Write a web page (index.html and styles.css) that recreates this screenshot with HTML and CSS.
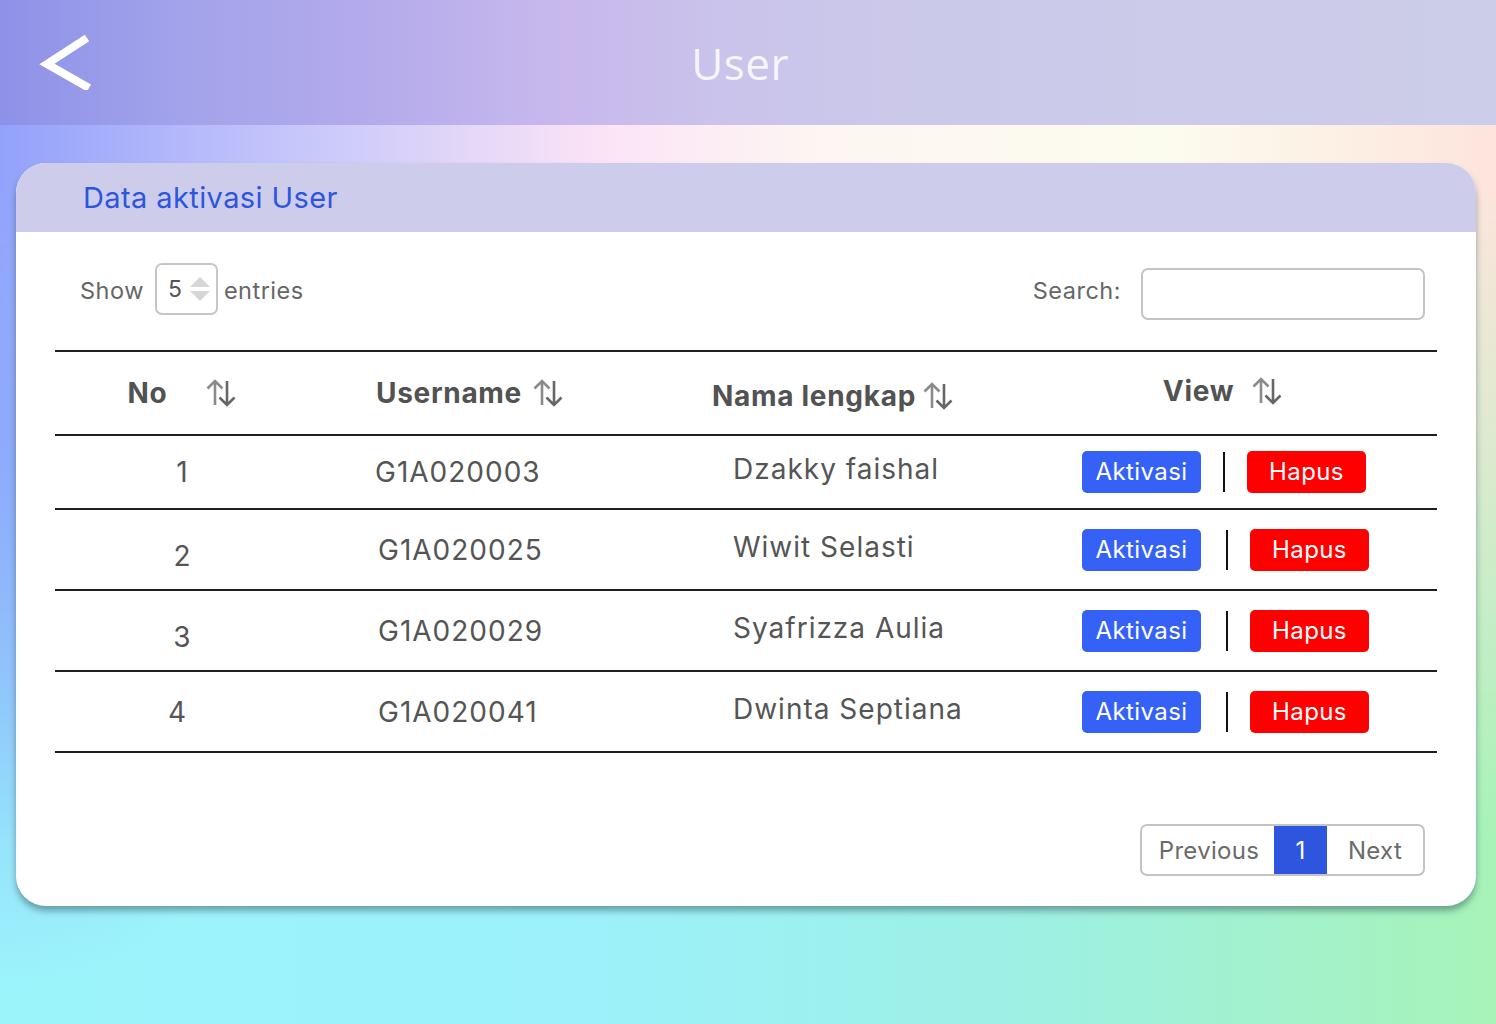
FILE: index.html
```html
<!DOCTYPE html>
<html lang="id">
<head>
<meta charset="utf-8">
<title>User</title>
<link rel="stylesheet" href="styles.css">
</head>
<body>
<div class="page">
  <header class="topbar">
    <a class="back" href="#" aria-label="Kembali">
      <svg width="56" height="56" viewBox="0 0 56 56"><path d="M48 4 L8 30 L50 54" fill="none" stroke="#fff" stroke-width="8" stroke-linejoin="miter"/></svg>
    </a>
    <h1 class="title">User</h1>
    <span class="back-spacer"></span>
  </header>

  <main class="card">
    <div class="card-head">Data aktivasi User</div>
    <div class="card-body">
      <div class="controls">
        <div class="show">
          <span class="lbl">Show</span>
          <div class="select">
            <span class="select-val">5</span>
            <span class="spin">
              <span class="tri up"></span>
              <span class="tri down"></span>
            </span>
          </div>
          <span class="lbl entries">entries</span>
        </div>
        <div class="search">
          <span class="lbl">Search:</span>
          <div class="search-input"></div>
        </div>
      </div>

      <div class="table">
        <div class="row head">
          <div class="c1 gap-no">No <svg class="sort" viewBox="0 0 36 30"><path d="M12 27V3M4.5 10.5L12 3l7.5 7.5" fill="none" stroke="#8a8a8a" stroke-width="2.6"/><path d="M24 3v24M16.5 19.5L24 27l7.5-7.5" fill="none" stroke="#666" stroke-width="2.6"/></svg></div>
          <div class="c2 gap-user">Username <svg class="sort" viewBox="0 0 36 30"><path d="M12 27V3M4.5 10.5L12 3l7.5 7.5" fill="none" stroke="#8a8a8a" stroke-width="2.6"/><path d="M24 3v24M16.5 19.5L24 27l7.5-7.5" fill="none" stroke="#666" stroke-width="2.6"/></svg></div>
          <div class="c3 gap-nama">Nama lengkap <svg class="sort" viewBox="0 0 36 30"><path d="M12 27V3M4.5 10.5L12 3l7.5 7.5" fill="none" stroke="#8a8a8a" stroke-width="2.6"/><path d="M24 3v24M16.5 19.5L24 27l7.5-7.5" fill="none" stroke="#666" stroke-width="2.6"/></svg></div>
          <div class="c4 gap-view">View <svg class="sort" viewBox="0 0 36 30"><path d="M12 27V3M4.5 10.5L12 3l7.5 7.5" fill="none" stroke="#8a8a8a" stroke-width="2.6"/><path d="M24 3v24M16.5 19.5L24 27l7.5-7.5" fill="none" stroke="#666" stroke-width="2.6"/></svg></div>
        </div>

        <div class="row first">
          <div class="c1">1</div>
          <div class="c2">G1A020003</div>
          <div class="c3 name-up">Dzakky faishal</div>
          <div class="c4 actions"><button class="btn blue">Aktivasi</button><span class="sep"></span><button class="btn red">Hapus</button></div>
        </div>
        <div class="row">
          <div class="c1 num-down">2</div>
          <div class="c2 shift">G1A020025</div>
          <div class="c3 name-up">Wiwit Selasti</div>
          <div class="c4 actions shift-act"><button class="btn blue">Aktivasi</button><span class="sep"></span><button class="btn red">Hapus</button></div>
        </div>
        <div class="row">
          <div class="c1 num-down">3</div>
          <div class="c2 shift">G1A020029</div>
          <div class="c3 name-up">Syafrizza Aulia</div>
          <div class="c4 actions shift-act"><button class="btn blue">Aktivasi</button><span class="sep"></span><button class="btn red">Hapus</button></div>
        </div>
        <div class="row">
          <div class="c1 num-left">4</div>
          <div class="c2 shift">G1A020041</div>
          <div class="c3 name-up">Dwinta Septiana</div>
          <div class="c4 actions shift-act"><button class="btn blue">Aktivasi</button><span class="sep"></span><button class="btn red">Hapus</button></div>
        </div>
      </div>

      <div class="pager-wrap">
        <div class="pager">
          <span class="pg prev">Previous</span>
          <span class="pg active">1</span>
          <span class="pg next">Next</span>
        </div>
      </div>
    </div>
  </main>
</div>
</body>
</html>
```

FILE: styles.css
```css
* { box-sizing: border-box; }

html, body { margin: 0; padding: 0; }

body {
  width: 1496px;
  height: 1024px;
  overflow: hidden;
  font-family: Inter, "Noto Sans", "Liberation Sans", sans-serif;
  color: #555;
  background:
    radial-gradient(ellipse 360px 560px at 0% 42%, rgba(134, 178, 251, 0.95) 0%, rgba(134, 178, 251, 0) 100%),
    linear-gradient(90deg, #9cf4fb 0%, #9cf1fa 40%, #9df0e4 68%, #a7f3b8 100%);
}

.page {
  position: relative;
  height: 1024px;
}

.page::before {
  content: "";
  position: absolute;
  inset: 0;
  background: linear-gradient(90deg, #92a2fb 0%, #b4b8fb 12%, #cbcafa 22%, #fbe3f6 40%, #fdf6f2 55%, #fcfcee 78%, #fde4dc 100%);
  -webkit-mask-image: linear-gradient(180deg, #000 0%, #000 18%, rgba(0,0,0,0.6) 45%, rgba(0,0,0,0) 82%);
  mask-image: linear-gradient(180deg, #000 0%, #000 18%, rgba(0,0,0,0.6) 45%, rgba(0,0,0,0) 82%);
  z-index: 0;
}

.topbar, .card { position: relative; z-index: 1; }

.topbar {
  height: 125px;
  display: flex;
  align-items: center;
  justify-content: space-between;
  padding: 0 0 0 39px;
  background: linear-gradient(90deg, #8e91e8 0%, #a2a3eb 12%, #b3aaeb 24%, #c3b5ed 34%, #c8b8ec 38%, #cac3eb 48%, #cbc9ea 62%, #cccde9 100%);
}

.back { display: block; width: 56px; height: 56px; margin-top: -2px; }
.back svg { display: block; }
.back-spacer { width: 95px; }

.title {
  margin: 0;
  font-family: "Open Sans", "Noto Sans", sans-serif;
  font-weight: 400;
  font-size: 44px;
  letter-spacing: 0.5px;
  color: rgba(255, 255, 255, 0.85);
  transform: translateX(-8px);
}

.card {
  margin: 38px 20px 0 16px;
  background: #fff;
  border-radius: 30px;
  box-shadow: 0 5px 6px rgba(40, 70, 80, 0.45);
  overflow: hidden;
}

.card-head {
  height: 69px;
  background: #cdcdeb;
  color: #2d56df;
  font-size: 29px;
  letter-spacing: 0.4px;
  padding: 18px 0 0 67px;
  line-height: 34px;
}

.card-body {
  padding: 36px 39px 30px 39px;
}

.controls {
  display: flex;
  justify-content: space-between;
  align-items: center;
  height: 52px;
  padding: 0 12px 0 25px;
  font-size: 23.5px;
  letter-spacing: 0.5px;
  color: #666;
}

.lbl { margin-top: -8px; }

.show { display: flex; align-items: center; gap: 11px; }
.show .entries { margin-left: -5px; }

.select {
  width: 63px;
  height: 52px;
  border: 2px solid #c6c6c6;
  border-radius: 7px;
  display: flex;
  align-items: center;
  justify-content: space-between;
  padding: 0 6px 0 11px;
  margin-top: -10px;
}

.select-val { font-size: 23px; color: #555; }

.spin { display: flex; flex-direction: column; gap: 4px; }
.tri { width: 0; height: 0; border-left: 10px solid transparent; border-right: 10px solid transparent; }
.tri.up { border-bottom: 10px solid #d7d7d7; }
.tri.down { border-top: 10px solid #d7d7d7; }

.search { display: flex; align-items: center; gap: 20px; }
.search-input {
  width: 284px;
  height: 52px;
  border: 2px solid #c4c4c4;
  border-radius: 7px;
}

.table {
  margin-top: 30px;
  border-top: 2px solid #1e1e1e;
}

.row {
  display: grid;
  grid-template-columns: 255px 330px 371px 426px;
  align-items: center;
  height: 81px;
  border-bottom: 2px solid #1e1e1e;
  font-size: 28px;
  letter-spacing: 1px;
  color: #555;
}

.row.head { height: 84px; font-weight: 700; color: #525252; letter-spacing: 0.7px; }
.row.first { height: 74px; }

.c1 { text-align: center; display: flex; justify-content: center; align-items: center; }
.c2 { padding-left: 65px; display: flex; align-items: center; }
.c3 { padding-left: 93px; display: flex; align-items: center; }
.c4 { display: flex; justify-content: center; align-items: center; }

.row.head .c3 { padding-left: 72px; margin-top: 6px; }
.row.head .c2 { padding-left: 66px; }

.sort { width: 36px; height: 30px; display: block; }
.gap-no { gap: 36px; padding-left: 2px; }
.gap-user { gap: 8px; }
.gap-nama { gap: 4px; }
.gap-view { gap: 15px; margin-top: -4px; }

.name-up { margin-top: -6px; }
.num-down { margin-top: 12px; }
.num-left { padding-right: 10px; }
.shift { padding-left: 68px; }
.shift-act { padding-left: 3px; }
.shift-act .sep { margin-left: 3px; margin-right: 0; }

.actions { gap: 22px; }

.btn {
  width: 119px;
  height: 42px;
  border: none;
  border-radius: 5px;
  font-family: Inter, "Noto Sans", sans-serif;
  font-size: 24px;
  letter-spacing: 0.4px;
  color: #fff;
  padding: 0;
  line-height: 42px;
}
.btn.blue { background: #3561f7; }
.btn.red { background: #ff0000; }

.sep { width: 2px; height: 40px; background: #111; }

.pager-wrap {
  display: flex;
  justify-content: flex-end;
  padding-right: 12px;
  margin-top: 71px;
}

.pager {
  display: flex;
  height: 52px;
  border: 2px solid #c4c4c4;
  border-radius: 7px;
  overflow: hidden;
  font-size: 24px;
  letter-spacing: 0.3px;
  color: #6b6b6b;
}

.pg { display: flex; align-items: center; justify-content: center; }
.prev { width: 132px; padding-left: 2px; }
.active { width: 53px; background: #2d55de; color: #fff; margin: -2px 0; }
.next { width: 96px; }
```
